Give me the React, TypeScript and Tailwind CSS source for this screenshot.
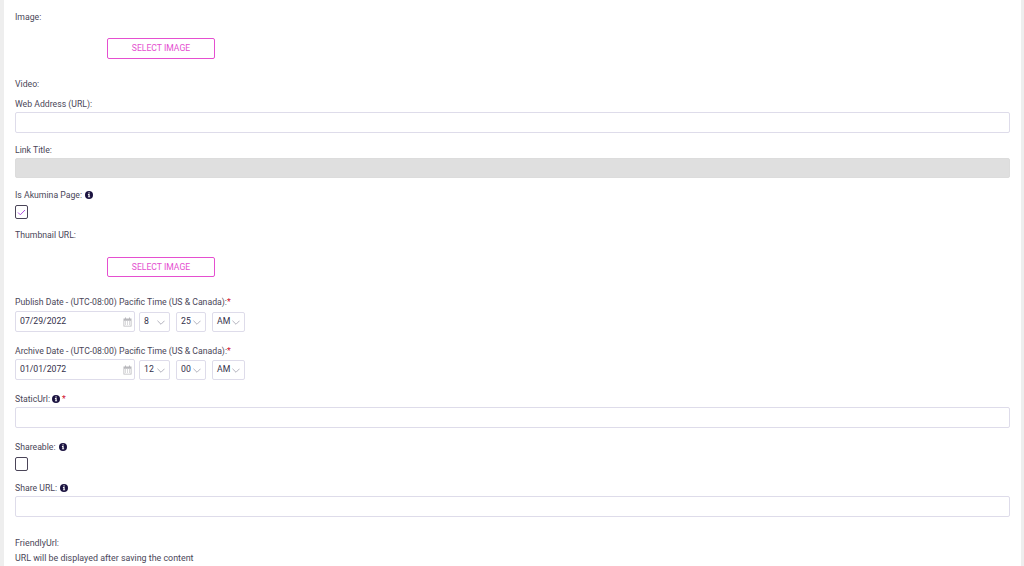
import React from "react";

function Info() {
  return (
    <svg width="8" height="8" viewBox="0 0 9 9" className="shrink-0">
      <circle cx="4.5" cy="4.5" r="4.5" fill="#1b1340" />
      <rect x="3.9" y="1.5" width="1.3" height="1.3" fill="#fff" />
      <path d="M3.3 3.5h1.9v2.7h.6v.9H3.3v-.9h.6V4.4h-.6z" fill="#fff" />
    </svg>
  );
}

function Label({ children, className = "" }: { children: React.ReactNode; className?: string }) {
  return (
    <div className={`flex h-[12px] items-center gap-[3px] text-[8.7px] leading-[12px] text-[#4a4658] ${className}`}>
      {children}
    </div>
  );
}

function TextBox({ className = "" }: { className?: string }) {
  return <div className={`h-[21px] w-[995px] rounded-[2px] border border-[#dedcea] bg-white ${className}`} />;
}

function SelectBtn({ className = "" }: { className?: string }) {
  return (
    <div
      className={`ml-[92px] flex w-[108px] items-center justify-center rounded-[2px] border border-[#e54fd0] bg-white text-[8.6px] text-[#e54fd0] ${className}`}
    >
      SELECT IMAGE
    </div>
  );
}

function Chevron() {
  return (
    <svg width="8" height="5" viewBox="0 0 9 5" fill="none" stroke="#a8a8b4" strokeWidth="1" className="shrink-0">
      <path d="M.5.5l4 4 4-4" />
    </svg>
  );
}

function Drop({ value, width, gap }: { value: string; width: string; gap: string }) {
  return (
    <div className={`flex h-[20px] items-center justify-between rounded-[2px] border border-[#dedcea] bg-white pl-[4px] pr-[4px] text-[8.7px] text-[#33304a] ${width} ${gap}`}>
      <span>{value}</span>
      <Chevron />
    </div>
  );
}

function Calendar() {
  return (
    <svg width="9" height="10" viewBox="0 0 9 10" fill="#b8b8bc">
      <path d="M0.5 1.5h8v8h-8z M1.3 3.8v5h6.4v-5z" fillRule="evenodd" />
      <rect x="2" y="0.5" width="1" height="2" />
      <rect x="6" y="0.5" width="1" height="2" />
      <path d="M2 4.5h1v1H2zM4 4.5h1v1H4zM6 4.5h1v1H6zM2 6.5h1v1H2zM4 6.5h1v1H4zM6 6.5h1v1H6z" />
    </svg>
  );
}

function DateRow({ date, h, m }: { date: string; h: string; m: string }) {
  return (
    <div className="flex items-end">
      <div className="flex h-[21px] w-[120px] items-center justify-between rounded-[2px] border border-[#dedcea] bg-white pl-[4px] pr-[2px] text-[8.7px] text-[#33304a]">
        <span>{date}</span>
        <Calendar />
      </div>
      <Drop value={h} width="w-[31px]" gap="ml-[4px]" />
      <Drop value={m} width="w-[30px]" gap="ml-[6px]" />
      <Drop value="AM" width="w-[33px]" gap="ml-[6px]" />
    </div>
  );
}

function Req() {
  return <span className="text-[#d01030]">*</span>;
}

export default function App() {
  return (
    <div className="h-[566px] overflow-hidden bg-[#eeeeee] pl-[4px] pr-[3px] font-['Roboto',sans-serif]">
      <div className="h-[566px] overflow-hidden bg-white pl-[11px] pt-[11px]">
        <Label>Image:</Label>
        <SelectBtn className="mt-[15px] h-[21px]" />
        <Label className="mt-[19px]">Video:</Label>
        <Label className="mt-[8px]">Web Address (URL):</Label>
        <TextBox className="mt-[2px]" />
        <Label className="mt-[11px]">Link Title:</Label>
        <div className="mt-[2px] h-[20px] w-[995px] rounded-[2px] border border-[#dcdcdc] bg-[#dfdfdf]" />
        <Label className="mt-[11px]">
          Is Akumina Page: <Info />
        </Label>
        <div className="mt-[4px] flex h-[14px] w-[13px] items-center justify-center rounded-[2px] border border-[#4a4458] bg-white">
          <svg width="9" height="7" viewBox="0 0 9 7" fill="none" stroke="#b050e0" strokeWidth="1">
            <path d="M1 3.5l2.3 2.3L8 1" />
          </svg>
        </div>
        <Label className="mt-[10px]">Thumbnail URL:</Label>
        <SelectBtn className="mt-[16px] h-[20px]" />
        <Label className="mt-[19px]">
          <span>
            Publish Date - (UTC-08:00) Pacific Time (US &amp; Canada):<Req />
          </span>
        </Label>
        <div className="mt-[3px]">
          <DateRow date="07/29/2022" h="8" m="25" />
        </div>
        <Label className="mt-[13px]">
          <span>
            Archive Date - (UTC-08:00) Pacific Time (US &amp; Canada):<Req />
          </span>
        </Label>
        <div className="mt-[2px]">
          <DateRow date="01/01/2072" h="12" m="00" />
        </div>
        <Label className="mt-[13px] !gap-[2px]">
          StaticUrl: <Info /> <Req />
        </Label>
        <TextBox className="mt-[2px]" />
        <Label className="mt-[13px]">
          Shareable: <Info />
        </Label>
        <div className="mt-[4px] h-[14px] w-[13px] rounded-[2px] border border-[#4a4458] bg-white" />
        <Label className="mt-[11px]">
          Share URL: <Info />
        </Label>
        <TextBox className="mt-[2px]" />
        <Label className="mt-[20px] text-[8.9px]">FriendlyUrl:</Label>
        <Label className="mt-[3px] text-[8.9px]">URL will be displayed after saving the content</Label>
      </div>
    </div>
  );
}
